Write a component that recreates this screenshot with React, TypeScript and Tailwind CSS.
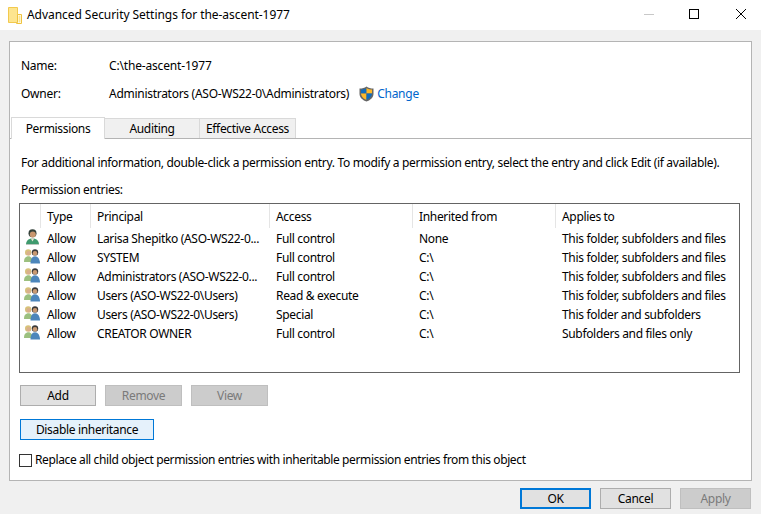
import React from "react";

const font = { fontFamily: '"Noto Sans", "Open Sans", sans-serif' };

function Folder() {
  return (
    <svg width="14" height="17" viewBox="0 0 14 17" className="block">
      <path d="M0.5 0.5H9.5V15.5H0.5Z" fill="#fde58f" stroke="#f2c94e" />
      <path d="M9.5 7.5H13.5V16.5H8.5V15.5H9.5Z" fill="#fff" stroke="#eec340" />
      <rect x="10.5" y="8.5" width="2" height="7" fill="#fde58f" />
    </svg>
  );
}

function Shield() {
  return (
    <svg width="15" height="16" viewBox="0 0 15 16" className="block">
      <path d="M7.5 0.5C9.5 2 11.5 2.5 14.5 2.5V8C14.5 11.5 11 14.5 7.5 15.5C4 14.5 0.5 11.5 0.5 8V2.5C3.5 2.5 5.5 2 7.5 0.5Z" fill="#666" />
      <path d="M7.5 2C6 3 4 3.6 2 3.6V7.5H7.5Z" fill="#0f6cbd" />
      <path d="M7.5 2C9 3 11 3.6 13 3.6V7.5H7.5Z" fill="#fdb827" />
      <path d="M2 7.5H7.5V14C5 13 2.300 11 2 7.500Z" fill="#fdb827" />
      <path d="M13 7.5H7.5V14C10 13 12.700 11 13 7.500Z" fill="#0f6cbd" />
    </svg>
  );
}

function UserIcon() {
  return (
    <svg width="16" height="17" viewBox="0 0 16 17" className="block">
      <circle cx="8.500" cy="4.300" r="4" fill="#33403a" />
      <circle cx="8.800" cy="5.500" r="3" fill="#c9966e" />
      <path d="M2 16C2 12 4 9.500 8.500 9.500C13 9.500 15 12 15 16Z" fill="#3f9a6e" />
      <path d="M6.800 9.500L8.500 12.500L10.200 9.500Z" fill="#e9e2d4" />
      <path d="M2 16H15V15H2Z" fill="#b9c6bd" />
    </svg>
  );
}

function GroupIcon() {
  return (
    <svg width="16" height="15" viewBox="0 0 16 15" className="block">
      <circle cx="4.200" cy="3.400" r="3.200" fill="#d8c27a" />
      <circle cx="4.600" cy="4.200" r="2.200" fill="#d9b08c" />
      <path d="M0 13C0 9.500 1.500 7.300 4.500 7.300C7 7.300 8.500 9.500 8.500 13Z" fill="#9cc07f" />
      <circle cx="11" cy="3.400" r="3.200" fill="#3a3a3a" />
      <circle cx="11" cy="4.200" r="2.300" fill="#c99a72" />
      <path d="M6.500 14.500C6.500 10.500 8 7.300 11 7.300C14 7.300 16 10.500 16 14.500Z" fill="#4c86bb" />
    </svg>
  );
}

const rows = [
  ["Larisa Shepitko (ASO-WS22-0...", "Full control", "None", "This folder, subfolders and files", true],
  ["SYSTEM", "Full control", "C:\\", "This folder, subfolders and files", false],
  ["Administrators (ASO-WS22-0...", "Full control", "C:\\", "This folder, subfolders and files", false],
  ["Users (ASO-WS22-0\\Users)", "Read & execute", "C:\\", "This folder, subfolders and files", false],
  ["Users (ASO-WS22-0\\Users)", "Special", "C:\\", "This folder and subfolders", false],
  ["CREATOR OWNER", "Full control", "C:\\", "Subfolders and files only", false],
] as const;

const gridCols = "grid grid-cols-[20px_50px_179px_143px_143px_1fr]";

function Head({ children, first }: { children?: React.ReactNode; first?: boolean }) {
  return (
    <div className={`h-[24px] pl-[6px] pt-px flex items-center ${first ? "" : "border-l border-[#e5e5e5]"}`}>{children}</div>
  );
}

function Btn({ children, cls }: { children: React.ReactNode; cls: string }) {
  return <div className={`h-[21px] flex items-center justify-center border ${cls}`}>{children}</div>;
}

const normal = "bg-[#e1e1e1] border-[#adadad] text-black";
const disabled = "bg-[#cccccc] border-[#bfbfbf] text-[#7a7a7a]";

export default function App() {
  return (
    <div style={font} className="w-[761px] h-[514px] bg-[#f0f0f0] text-[12px] leading-[16px] tracking-[-0.33px] text-black overflow-hidden flex flex-col">
      <div className="h-[30px] bg-white flex items-center pl-[8px]">
        <Folder />
        <span className="ml-[5px] text-[12px] tracking-[-0.05px] text-black">Advanced Security Settings for the-ascent-1977</span>
        <div className="ml-auto flex items-center pb-[2px]">
          <div className="w-[10px] h-px bg-[#c8c8c8] mr-[35px]" />
          <div className="w-[10px] h-[10px] border border-black mr-[37px]" />
          <svg width="10" height="10" viewBox="0 0 10 10" className="mr-[15px]">
            <path d="M0 0L10 10M10 0L0 10" stroke="#000" strokeWidth="1" fill="none" />
          </svg>
        </div>
      </div>

      <div className="mt-[11px] ml-[9px] w-[743px] h-[440px] bg-white border border-[#b4b4b4] flex flex-col">
        <div className="pl-[11px] pt-[16px] h-[75px] tracking-[-0.25px]">
          <div className="flex h-[16px] items-center">
            <span className="w-[88px]">Name:</span>
            <span className="tracking-[-0.17px]">C:\the-ascent-1977</span>
          </div>
          <div className="flex h-[16px] items-center mt-[12px]">
            <span className="w-[88px]">Owner:</span>
            <span className="tracking-[-0.28px]">Administrators (ASO-WS22-0\Administrators)</span>
            <span className="ml-[10px] mr-[3px]"><Shield /></span>
            <span className="text-[#0066cc]">Change</span>
          </div>
        </div>

        <div className="h-[22px] flex items-end border-b border-[#b4b4b4] pl-px relative">
          <div className="w-[94px] h-[22px] -mb-px bg-white border border-b-0 border-[#d9d9d9] flex items-center justify-center relative z-10">Permissions</div>
          <div className="w-[95px] h-[20px] bg-[#f0f0f0] border-t border-r border-[#d9d9d9] flex items-center justify-center">Auditing</div>
          <div className="w-[96px] h-[20px] bg-[#f0f0f0] border-t border-r border-[#d9d9d9] flex items-center justify-center">Effective Access</div>
        </div>

        <div className="pl-[11px] pt-[16px] flex-1 flex flex-col items-start">
          <div className="h-[16px] whitespace-nowrap tracking-[-0.32px]">For additional information, double-click a permission entry. To modify a permission entry, select the entry and click Edit (if available).</div>
          <div className="h-[16px] mt-[11px]">Permission entries:</div>
          <div className="mt-[5px] -ml-[2px] w-[721px] h-[170px] border border-[#646464] bg-white">
            <div className={gridCols}>
              <Head first />
              <Head>Type</Head>
              <Head>Principal</Head>
              <Head>Access</Head>
              <Head>Inherited from</Head>
              <Head>Applies to</Head>
            </div>
            {rows.map((r, i) => (
              <div key={i} className={`${gridCols} h-[19px] items-center`}>
                <div className="pl-[4px]">{r[4] ? <UserIcon /> : <GroupIcon />}</div>
                <div className="pl-[7px] pt-[2px]">Allow</div>
                <div className="pl-[7px] pt-[2px] whitespace-nowrap">{r[0]}</div>
                <div className="pl-[7px] pt-[2px]">{r[1]}</div>
                <div className="pl-[7px] pt-[2px]">{r[2]}</div>
                <div className="pl-[7px] pt-[2px] whitespace-nowrap">{r[3]}</div>
              </div>
            ))}
          </div>

          <div className="flex mt-[12px] -ml-[1px]">
            <Btn cls={`w-[76px] ${normal}`}>Add</Btn>
            <Btn cls={`w-[77px] ml-[9px] ${disabled}`}>Remove</Btn>
            <Btn cls={`w-[77px] ml-[9px] ${disabled}`}>View</Btn>
          </div>
          <Btn cls="w-[134px] mt-[13px] -ml-[1px] bg-[#e5f1fb] border-[#0078d7] text-black">Disable inheritance</Btn>
          <div className="flex items-center mt-[12px] -ml-[2px] h-[16px]">
            <div className="w-[13px] h-[13px] border border-[#333] bg-white" />
            <span className="ml-[3px] whitespace-nowrap tracking-[-0.38px]">Replace all child object permission entries with inheritable permission entries from this object</span>
          </div>
        </div>
      </div>

      <div className="flex justify-end mt-[7px] pr-[10px] gap-[9px]">
        <Btn cls="w-[71px] h-[21px] bg-[#e1e1e1] border-2 border-[#0078d7] text-black">OK</Btn>
        <Btn cls={`w-[71px] ${normal}`}>Cancel</Btn>
        <Btn cls={`w-[71px] ${disabled}`}>Apply</Btn>
      </div>
    </div>
  );
}
